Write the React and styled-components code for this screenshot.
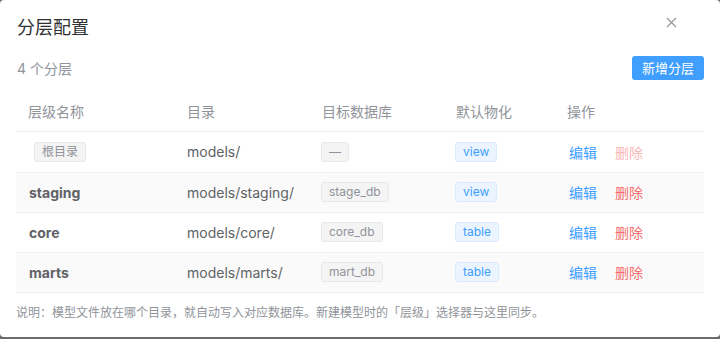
import React from "react";
import styled, { createGlobalStyle } from "styled-components";

const GlobalStyle = createGlobalStyle`
  html, body {
    margin: 0;
    padding: 0;
    background: #6b6b6b;
  }
  body {
    font-family: Inter, "Noto Sans CJK SC", "Noto Sans", sans-serif;
    -webkit-font-smoothing: antialiased;
  }
`;

const layers = [
  { name: "根目录", root: true, dir: "models/", db: "—", mat: "view" },
  { name: "staging", dir: "models/staging/", db: "stage_db", mat: "view" },
  { name: "core", dir: "models/core/", db: "core_db", mat: "table" },
  { name: "marts", dir: "models/marts/", db: "mart_db", mat: "table" },
];

function App() {
  return (
    <>
      <GlobalStyle />
      <Dialog>
        <Header>
          <Title>分层配置</Title>
          <Close aria-label="close">
            <svg width="11" height="11" viewBox="0 0 11 11">
              <path d="M1 1 L10 10 M10 1 L1 10" stroke="#909399" strokeWidth="1.1" fill="none" />
            </svg>
          </Close>
        </Header>
        <Body>
          <Toolbar>
            <Count>4 个分层</Count>
            <PrimaryButton>新增分层</PrimaryButton>
          </Toolbar>
          <Table>
            <colgroup>
              <col style={{ width: 159 }} />
              <col style={{ width: 135 }} />
              <col style={{ width: 134 }} />
              <col style={{ width: 111 }} />
              <col />
            </colgroup>
            <thead>
              <tr>
                <Th>层级名称</Th>
                <Th>目录</Th>
                <Th>目标数据库</Th>
                <Th>默认物化</Th>
                <Th>操作</Th>
              </tr>
            </thead>
            <tbody>
              {layers.map((l, i) => (
                <Row key={l.dir} $striped={i % 2 === 1}>
                  <Td>
                    {l.root ? <Tag $root>{l.name}</Tag> : <Name>{l.name}</Name>}
                  </Td>
                  <Td>{l.dir}</Td>
                  <Td>
                    <Tag>{l.db}</Tag>
                  </Td>
                  <Td>
                    <Tag $blue>{l.mat}</Tag>
                  </Td>
                  <Td>
                    <Actions>
                      <LinkBtn>编辑</LinkBtn>
                      <LinkBtn $danger $disabled={l.root}>
                        删除
                      </LinkBtn>
                    </Actions>
                  </Td>
                </Row>
              ))}
            </tbody>
          </Table>
          <Note>说明：模型文件放在哪个目录，就自动写入对应数据库。新建模型时的「层级」选择器与这里同步。</Note>
        </Body>
      </Dialog>
    </>
  );
}

export default App;

const Dialog = styled.div`
  width: 720px;
  height: 337px;
  background: #ffffff;
  border-radius: 4px;
  box-sizing: border-box;
  overflow: hidden;
`;

const Header = styled.div`
  display: flex;
  align-items: center;
  justify-content: space-between;
  padding: 16px 42px 0 17px;
  position: relative;
`;

const Title = styled.div`
  font-size: 18px;
  line-height: 24px;
  color: #303133;
`;

const Close = styled.div`
  position: absolute;
  right: 43px;
  top: 17px;
  width: 11px;
  height: 11px;
  display: flex;
`;

const Body = styled.div`
  padding: 16px 16px 0 16px;
`;

const Toolbar = styled.div`
  display: flex;
  align-items: center;
  justify-content: space-between;
  height: 24px;
`;

const Count = styled.div`
  font-size: 14px;
  color: #909399;
  padding-left: 1px;
`;

const PrimaryButton = styled.button`
  height: 24px;
  padding: 0 10px;
  border: none;
  border-radius: 3px;
  background: #409eff;
  color: #ffffff;
  font-family: inherit;
  font-size: 13px;
  line-height: 24px;
  cursor: pointer;
`;

const Table = styled.table`
  width: 100%;
  margin-top: 11px;
  border-collapse: collapse;
  table-layout: fixed;
  font-size: 14px;
  color: #606266;
`;

const Th = styled.th`
  height: 40px;
  padding: 0 12px;
  text-align: left;
  font-weight: 400;
  color: #909399;
  border-bottom: 1px solid #ebeef5;
  box-sizing: border-box;
`;

const Row = styled.tr`
  background: ${(p) => (p.$striped ? "#fafafa" : "#ffffff")};
  &:first-child td {
    height: 41px;
  }
`;

const Td = styled.td`
  height: 40px;
  padding: 0 12px;
  border-bottom: 1px solid #ebeef5;
  box-sizing: border-box;
  white-space: nowrap;
`;

const Name = styled.span`
  font-weight: 700;
  color: #606266;
  padding-left: 1px;
`;

const Tag = styled.span`
  display: inline-block;
  height: 20px;
  line-height: 18px;
  padding: 0 7px;
  box-sizing: border-box;
  font-size: 12px;
  border-radius: 3px;
  border: 1px solid ${(p) => (p.$blue ? "#d9ecff" : "#e9e9eb")};
  background: ${(p) => (p.$blue ? "#ecf5ff" : "#f4f4f5")};
  color: ${(p) => (p.$blue ? "#409eff" : "#909399")};
  margin-left: ${(p) => (p.$root ? "6px" : "-1px")};
  vertical-align: middle;
`;

const Actions = styled.div`
  display: flex;
  gap: 18px;
  padding-left: 2px;
`;

const LinkBtn = styled.span`
  font-size: 14px;
  color: ${(p) =>
    p.$danger ? (p.$disabled ? "#fab6b6" : "#f56c6c") : "#409eff"};
  cursor: ${(p) => (p.$disabled ? "not-allowed" : "pointer")};
`;

const Note = styled.div`
  margin-top: 12px;
  font-size: 12px;
  line-height: 16px;
  color: #909399;
`;
